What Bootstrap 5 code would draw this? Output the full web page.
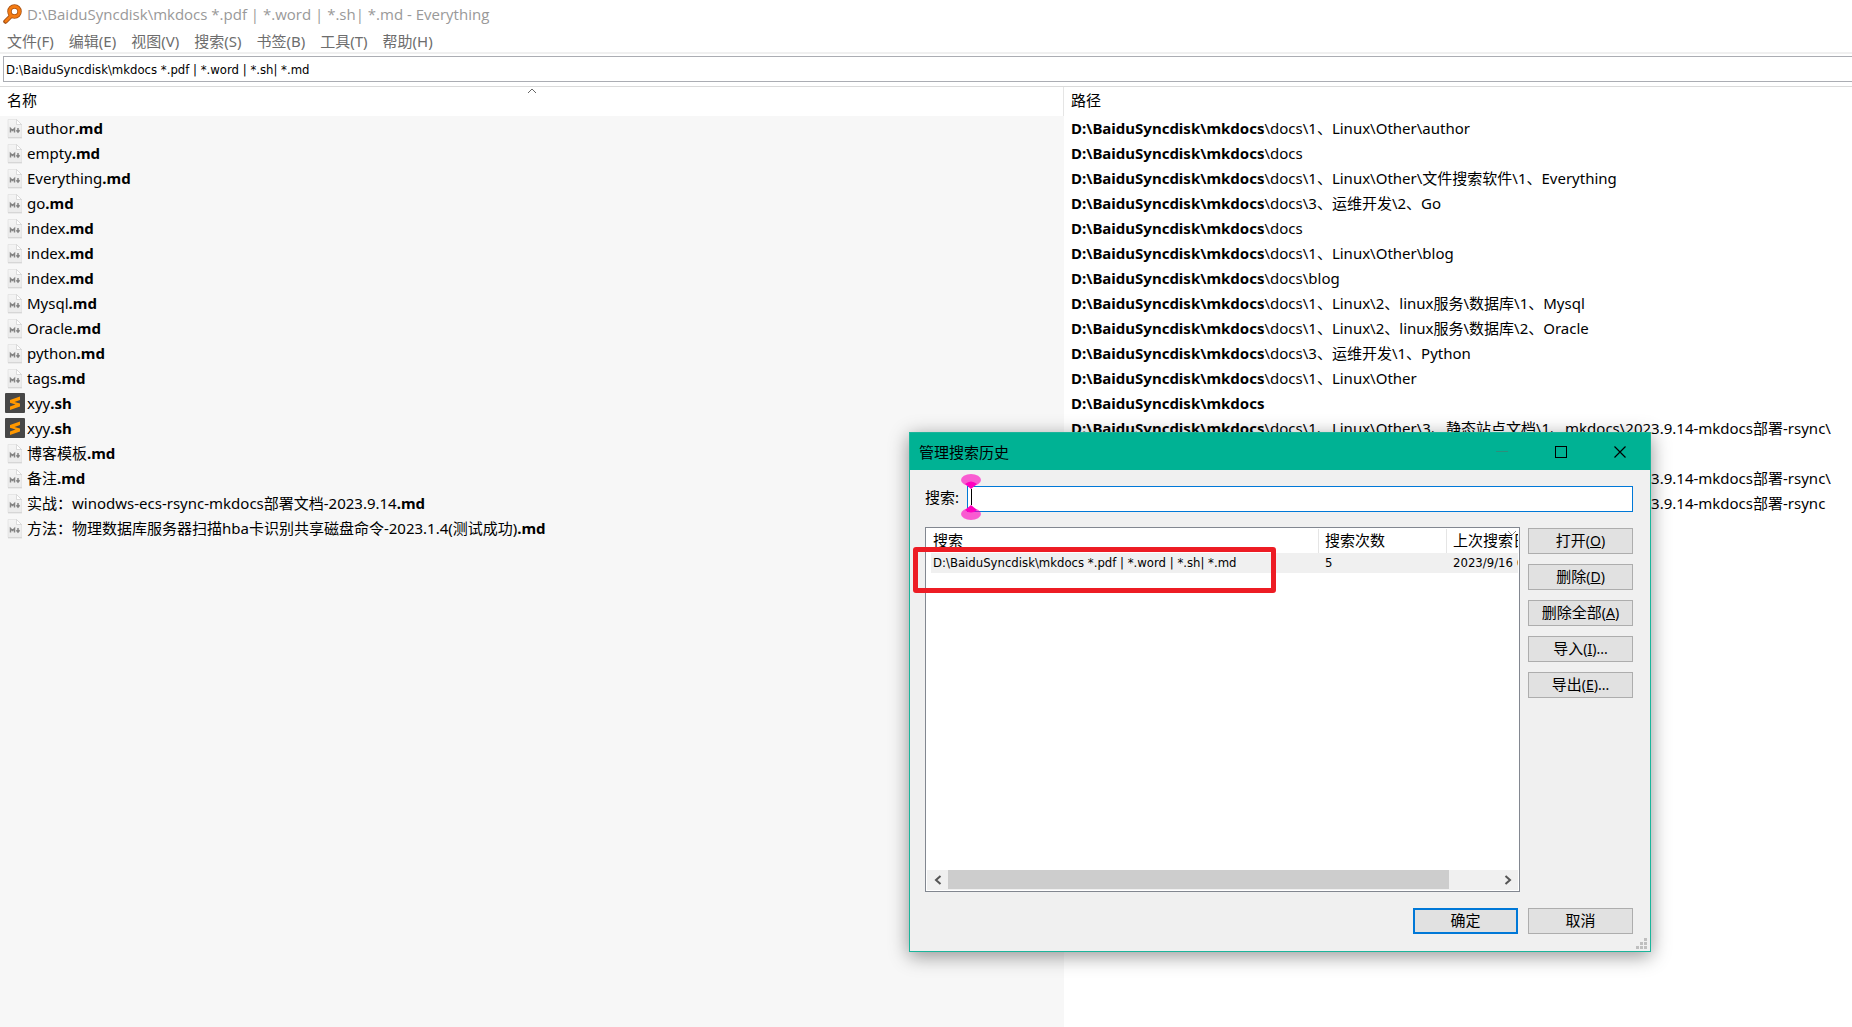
<!DOCTYPE html>
<html lang="zh-CN">
<head>
<meta charset="utf-8">
<meta name="viewport" content="width=device-width, initial-scale=1">
<title>D:\BaiduSyncdisk\mkdocs *.pdf | *.word | *.sh| *.md - Everything</title>
<link href="https://cdn.jsdelivr.net/npm/bootstrap@5.3.0/dist/css/bootstrap.min.css" rel="stylesheet">
<style>
  :root { --ui: "Noto Sans", "Noto Sans CJK SC", sans-serif; --tah: "DejaVu Sans Condensed", "Noto Sans CJK SC", sans-serif; }
  body { font-family: var(--ui); font-size: 15px; line-height: 20px; color: #000; background: #fff; }
  .app-title { height: 29px; padding: 0 0 2px 3px; gap: 5px; color: #999; font-family: "Open Sans", sans-serif; }
  .app-menu { height: 23px; padding-left: 7px; gap: 15px; border-bottom: 2px solid #f0f0f0; box-sizing: content-box; }
  .app-menu a { color: #6d6d6d; text-decoration: none; line-height: 24px; }
  .query-row { padding: 2px 0 4px 3px; border-bottom: 1px solid #dadada; }
  .query-box { width: 100%; height: 26px; border: 1px solid #abadb3; border-right: 0; padding: 0 2px; font: 13px/20px var(--tah); color: #000; border-radius: 0; outline: 0; display: block; }
  .files { table-layout: fixed; width: 100%; flex: 1; border-collapse: separate; border-spacing: 0; }
  .files th { height: 29px; padding: 0 7px 4px; font-weight: 400; position: relative; vertical-align: middle; }
  .files th:first-child { border-right: 1px solid #e5e5e5; }
  .files td { height: 25px; padding: 0 7px 2px; white-space: nowrap; overflow: hidden; vertical-align: middle; }
  .files td:first-child { background: #f7f7f7; padding-bottom: 1px; }
  .files td svg { float: left; margin-right: 4px; }
  .files td svg.doc { margin-top: 1px; }
  .files td svg.subl { margin: 0 2px 0 -2px; }
  .files .rest td { height: auto; }
  .sort-mark { position: absolute; left: 50%; top: 1px; margin-left: -4px; }
  .dlg { position: absolute; top: 432px; right: 201px; width: 742px; background: #f0f0f0; border: 1px solid #1bb59b; box-shadow: 0 4px 18px rgba(0,0,0,.42); }
  .dlg-head { height: 37px; background: #00b294; padding: 0 1px 0 9px; }
  .cap-btn { width: 59px; height: 36px; border: 0; background: none; padding: 0; display: flex; align-items: center; justify-content: center; }
  .dlg-body { padding: 16px 17px 17px 15px; }
  .field-row { margin-bottom: 15px; }
  .dlg-body label { padding-bottom: 4px; }
  .hist-input { height: 26px; border: 1px solid #0078d7; border-radius: 0; background: #fff; outline: 0; }
  .list-frame { border: 1px solid #828790; background: #fff; height: 365px; padding: 1px; min-width: 0; overflow: hidden; }
  .hist { table-layout: fixed; width: 100%; border-collapse: separate; border-spacing: 0; font: 13px/20px var(--tah); }
  .hist th { font: 15px/22px var(--ui); height: 24px; padding: 0 6px 2px; white-space: nowrap; overflow: hidden; border-right: 1px solid #e5e5e5; position: relative; }
  .hist th:last-child { border: 0; }
  .hist td { height: 20px; padding: 0 6px; background: #f0f0f0; white-space: nowrap; overflow: hidden; }
  .hist td:first-child { border-left: 4px solid #fff; padding-left: 2px; }
  .hist .sort-mark { left: auto; right: 1px; }
  .scroller { height: 20px; background: #f0f0f0; }
  .scroller button { width: 21px; border: 0; background: none; padding: 0; line-height: 0; }
  .thumb { width: 501px; height: 19px; background: #cdcdcd; }
  .win-btn { width: 105px; height: 26px; border: 1px solid #adadad; background: #e1e1e1; padding: 0 0 2px; font-size: 15px; line-height: 20px; color: #000; border-radius: 0; }
  .win-btn span { font: 14px var(--ui); }
  .win-btn.ok { border: 2px solid #0078d7; }
  .side { gap: 10px; padding-top: 1px; }
  .foot { gap: 10px; }
  .grip { position: absolute; right: 2px; bottom: 1px; }
  .red-frame { position: absolute; left: 3px; top: 114px; width: 363px; height: 46px; border: 5px solid #ed1c24; border-radius: 3px; pointer-events: none; }
  .caret-mark { position: absolute; left: 51px; top: 41px; pointer-events: none; }
</style>
</head>
<body class="min-vh-100 d-flex flex-column overflow-hidden position-relative">
<svg width="0" height="0" class="position-absolute" aria-hidden="true">
  <defs>
    <linearGradient id="pg" x1="0" y1="0" x2="0" y2="1"><stop offset="0" stop-color="#f4f4f4"/><stop offset="1" stop-color="#ebebeb"/></linearGradient>
    <symbol id="md" viewBox="0 0 16 20">
      <path d="M1 0.500H9.500L14.500 5.500V18.500H1Z" fill="url(#pg)" stroke="#e2e2e2" stroke-width=".8"/>
      <path d="M1 18.800H15" stroke="#d0d0d0"/>
      <path d="M9.500.500V5.500H14.500Z" fill="#fff" stroke="#cfcfcf" stroke-width=".7"/>
      <path d="M3.500 13.500V9.500L5.500 11.500L7.500 9.500V13.500" fill="none" stroke="#858585" stroke-width="1.500"/>
      <path d="M11 9V12.500M9.400 11.200L11 13L12.600 11.200" fill="none" stroke="#858585" stroke-width="1.500"/>
    </symbol>
    <symbol id="sub" viewBox="0 0 20 20">
      <rect width="20" height="20" rx="1" fill="#474747"/>
      <path d="M5 7L15 3.500V7L9.500 8.900L15 10.600V13.500L5 17V13.500L10.500 11.500L5 9.700Z" fill="#ff9800"/>
    </symbol>
  </defs>
</svg>

<header class="app-title d-flex align-items-center">
  <svg width="19" height="20" viewBox="0 0 19 20" aria-hidden="true"><path d="M8 12L2.500 17.500" stroke="#9b4a12" stroke-width="4.500" stroke-linecap="round"/><circle cx="11.500" cy="7.500" r="5" fill="#fff" stroke="#a8500f" stroke-width="4.500"/><circle cx="11.500" cy="7.500" r="5" fill="none" stroke="#f47b13" stroke-width="3"/><path d="M8 12L2.800 17.200" stroke="#f47b13" stroke-width="2.800" stroke-linecap="round"/></svg>
  <span>D:\BaiduSyncdisk\mkdocs *.pdf | *.word | *.sh| *.md - Everything</span>
</header>
<nav class="app-menu d-flex">
  <a href="#">文件(F)</a><a href="#">编辑(E)</a><a href="#">视图(V)</a><a href="#">搜索(S)</a><a href="#">书签(B)</a><a href="#">工具(T)</a><a href="#">帮助(H)</a>
</nav>
<div class="query-row"><input class="query-box" type="text" aria-label="搜索" value="D:\BaiduSyncdisk\mkdocs *.pdf | *.word | *.sh| *.md"></div>

<main class="d-flex flex-column flex-grow-1">
<table class="files flex-grow-1">
  <colgroup><col style="width:57.45%"><col></colgroup>
  <thead><tr><th scope="col">名称<svg class="sort-mark" width="10" height="6" viewBox="0 0 10 6" aria-hidden="true"><path d="M1 5L5 1L9 5" fill="none" stroke="#666"/></svg></th><th scope="col">路径</th></tr></thead>
  <tbody>
  <tr><td><svg class="doc" width="16" height="20"><use href="#md"/></svg>author<b>.md</b></td><td><b>D:\BaiduSyncdisk\mkdocs</b>\docs\1、Linux\Other\author</td></tr>
  <tr><td><svg class="doc" width="16" height="20"><use href="#md"/></svg>empty<b>.md</b></td><td><b>D:\BaiduSyncdisk\mkdocs</b>\docs</td></tr>
  <tr><td><svg class="doc" width="16" height="20"><use href="#md"/></svg>Everything<b>.md</b></td><td><b>D:\BaiduSyncdisk\mkdocs</b>\docs\1、Linux\Other\文件搜索软件\1、Everything</td></tr>
  <tr><td><svg class="doc" width="16" height="20"><use href="#md"/></svg>go<b>.md</b></td><td><b>D:\BaiduSyncdisk\mkdocs</b>\docs\3、运维开发\2、Go</td></tr>
  <tr><td><svg class="doc" width="16" height="20"><use href="#md"/></svg>index<b>.md</b></td><td><b>D:\BaiduSyncdisk\mkdocs</b>\docs</td></tr>
  <tr><td><svg class="doc" width="16" height="20"><use href="#md"/></svg>index<b>.md</b></td><td><b>D:\BaiduSyncdisk\mkdocs</b>\docs\1、Linux\Other\blog</td></tr>
  <tr><td><svg class="doc" width="16" height="20"><use href="#md"/></svg>index<b>.md</b></td><td><b>D:\BaiduSyncdisk\mkdocs</b>\docs\blog</td></tr>
  <tr><td><svg class="doc" width="16" height="20"><use href="#md"/></svg>Mysql<b>.md</b></td><td><b>D:\BaiduSyncdisk\mkdocs</b>\docs\1、Linux\2、linux服务\数据库\1、Mysql</td></tr>
  <tr><td><svg class="doc" width="16" height="20"><use href="#md"/></svg>Oracle<b>.md</b></td><td><b>D:\BaiduSyncdisk\mkdocs</b>\docs\1、Linux\2、linux服务\数据库\2、Oracle</td></tr>
  <tr><td><svg class="doc" width="16" height="20"><use href="#md"/></svg>python<b>.md</b></td><td><b>D:\BaiduSyncdisk\mkdocs</b>\docs\3、运维开发\1、Python</td></tr>
  <tr><td><svg class="doc" width="16" height="20"><use href="#md"/></svg>tags<b>.md</b></td><td><b>D:\BaiduSyncdisk\mkdocs</b>\docs\1、Linux\Other</td></tr>
  <tr><td><svg class="subl" width="20" height="20"><use href="#sub"/></svg>xyy<b>.sh</b></td><td><b>D:\BaiduSyncdisk\mkdocs</b></td></tr>
  <tr><td><svg class="subl" width="20" height="20"><use href="#sub"/></svg>xyy<b>.sh</b></td><td><b>D:\BaiduSyncdisk\mkdocs</b>\docs\1、Linux\Other\3、静态站点文档\1、mkdocs\2023.9.14-mkdocs部署-rsync\</td></tr>
  <tr><td><svg class="doc" width="16" height="20"><use href="#md"/></svg>博客模板<b>.md</b></td><td><b>D:\BaiduSyncdisk\mkdocs</b>\docs</td></tr>
  <tr><td><svg class="doc" width="16" height="20"><use href="#md"/></svg>备注<b>.md</b></td><td><b>D:\BaiduSyncdisk\mkdocs</b>\docs\1、Linux\Other\3、静态站点文档\1、mkdocs\2023.9.14-mkdocs部署-rsync\</td></tr>
  <tr><td><svg class="doc" width="16" height="20"><use href="#md"/></svg>实战：winodws-ecs-rsync-mkdocs部署文档-2023.9.14<b>.md</b></td><td><b>D:\BaiduSyncdisk\mkdocs</b>\docs\1、Linux\Other\3、静态站点文档\1、mkdocs\2023.9.14-mkdocs部署-rsync</td></tr>
  <tr><td><svg class="doc" width="16" height="20"><use href="#md"/></svg>方法：物理数据库服务器扫描hba卡识别共享磁盘命令-2023.1.4(测试成功)<b>.md</b></td><td><b>D:\BaiduSyncdisk\mkdocs</b>\docs</td></tr>
  <tr class="rest"><td></td><td></td></tr>
  </tbody>
</table>
</main>

<section class="dlg" role="dialog" aria-labelledby="dlgTitle">
  <div class="dlg-head d-flex align-items-center">
    <span id="dlgTitle" class="flex-grow-1">管理搜索历史</span>
    <button class="cap-btn" type="button" aria-label="最小化" disabled><svg width="12" height="12"><path d="M0 5.500H12" stroke="#2d8f7c"/></svg></button>
    <button class="cap-btn" type="button" aria-label="最大化"><svg width="12" height="12"><rect x=".5" y=".5" width="11" height="11" fill="none" stroke="#000"/></svg></button>
    <button class="cap-btn" type="button" aria-label="关闭"><svg width="12" height="12"><path d="M.5.5L11.500 11.500M11.500.5L.5 11.500" stroke="#000" stroke-width="1.200"/></svg></button>
  </div>
  <div class="dlg-body">
    <div class="field-row d-flex align-items-center">
      <label for="hist" class="me-2">搜索:</label>
      <input id="hist" type="text" class="hist-input flex-grow-1">
    </div>
    <div class="d-flex gap-2">
      <div class="list-frame flex-grow-1 d-flex flex-column">
        <table class="hist">
          <colgroup><col style="width:392px"><col style="width:128px"><col></colgroup>
          <thead><tr><th scope="col">搜索</th><th scope="col">搜索次数</th><th scope="col">上次搜索日期<svg class="sort-mark" width="10" height="6" viewBox="0 0 10 6" aria-hidden="true"><path d="M1 1L5 5L9 1" fill="none" stroke="#888"/></svg></th></tr></thead>
          <tbody><tr><td>D:\BaiduSyncdisk\mkdocs *.pdf | *.word | *.sh| *.md</td><td>5</td><td>2023/9/16 6:30</td></tr></tbody>
        </table>
        <div class="scroller d-flex mt-auto">
          <button type="button" aria-label="向左滚动"><svg width="8" height="10"><path d="M6.500 1L2 5L6.500 9" fill="none" stroke="#555" stroke-width="2"/></svg></button>
          <div class="thumb"></div>
          <button type="button" class="ms-auto" aria-label="向右滚动"><svg width="8" height="10"><path d="M1.500 1L6 5L1.500 9" fill="none" stroke="#555" stroke-width="2"/></svg></button>
        </div>
      </div>
      <div class="side d-flex flex-column">
        <button class="win-btn" type="button">打开<span>(<u>O</u>)</span></button>
        <button class="win-btn" type="button">删除<span>(<u>D</u>)</span></button>
        <button class="win-btn" type="button">删除全部<span>(<u>A</u>)</span></button>
        <button class="win-btn" type="button">导入<span>(<u>I</u>)...</span></button>
        <button class="win-btn" type="button">导出<span>(<u>E</u>)...</span></button>
      </div>
    </div>
    <div class="foot d-flex justify-content-end mt-3">
      <button class="win-btn ok" type="button">确定</button>
      <button class="win-btn" type="button">取消</button>
    </div>
  </div>
  <svg class="grip" width="12" height="12" aria-hidden="true"><path d="M8 0h3v3h-3zM4 4h3v3h-3zM8 4h3v3h-3zM0 8h3v3h-3zM4 8h3v3h-3zM8 8h3v3h-3z" fill="#bfbfbf"/></svg>
  <svg class="caret-mark" width="20" height="46" aria-hidden="true"><g fill="#ff00bf"><ellipse cx="10" cy="6" rx="10" ry="6" opacity=".62"/><ellipse cx="10" cy="40" rx="10" ry="6" opacity=".62"/><path d="M4 10Q10 5 16 10L10 15ZM4 36Q10 41 16 36L10 31Z"/></g><path d="M10.500 15V31" stroke="#000"/></svg>
  <div class="red-frame"></div>
</section>
<script src="https://cdn.jsdelivr.net/npm/bootstrap@5.3.0/dist/js/bootstrap.bundle.min.js"></script>
</body>
</html>
